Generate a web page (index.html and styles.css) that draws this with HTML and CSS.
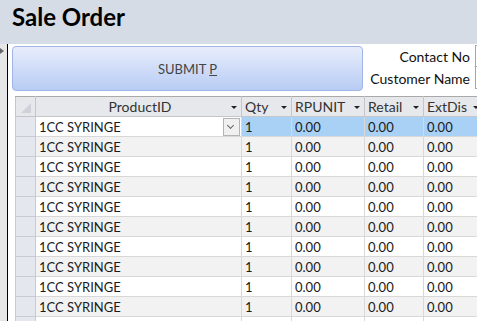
FILE: index.html
```html
<!DOCTYPE html>
<html lang="en">
<head>
    <meta charset="UTF-8">
    <meta name="viewport" content="width=device-width, initial-scale=1.0">
    <title>Sale Order</title>
    <link rel="stylesheet" href="styles.css">
</head>
<body>
    <!-- Form header -->
    <div class="form-header">
        <h1>Sale Order</h1>
    </div>

    <div class="form-body">
        <div class="nav-strip"><span class="nav-arrow"></span></div>

        <div class="detail">
            <div class="top-row">
                <button class="submit-btn">SUBMIT <u>P</u></button>
                <div class="fields">
                    <div class="field">
                        <label for="contact-no">Contact No</label>
                        <input type="text" id="contact-no">
                    </div>
                    <div class="field">
                        <label for="customer-name">Customer Name</label>
                        <input type="text" id="customer-name">
                    </div>
                </div>
            </div>

            <!-- Order lines datasheet -->
            <table class="sheet">
                <colgroup>
                    <col class="c-sel"><col class="c-prod"><col class="c-qty">
                    <col class="c-rp"><col class="c-ret"><col class="c-ext">
                </colgroup>
                <thead>
                    <tr>
                        <th class="corner"><span class="corner-mark"></span></th>
                        <th class="center">ProductID<span class="sort"></span></th>
                        <th>Qty<span class="sort"></span></th>
                        <th>RPUNIT<span class="sort"></span></th>
                        <th>Retail<span class="sort"></span></th>
                        <th>ExtDis<span class="sort"></span></th>
                    </tr>
                </thead>
                <tbody>
                    <tr class="current">
                        <td class="sel"></td>
                        <td class="combo">1CC SYRINGE<span class="combo-btn"></span></td>
                        <td>1</td><td>0.00</td><td>0.00</td><td>0.00</td>
                    </tr>
                    <tr><td class="sel"></td><td>1CC SYRINGE</td><td>1</td><td>0.00</td><td>0.00</td><td>0.00</td></tr>
                    <tr><td class="sel"></td><td>1CC SYRINGE</td><td>1</td><td>0.00</td><td>0.00</td><td>0.00</td></tr>
                    <tr><td class="sel"></td><td>1CC SYRINGE</td><td>1</td><td>0.00</td><td>0.00</td><td>0.00</td></tr>
                    <tr><td class="sel"></td><td>1CC SYRINGE</td><td>1</td><td>0.00</td><td>0.00</td><td>0.00</td></tr>
                    <tr><td class="sel"></td><td>1CC SYRINGE</td><td>1</td><td>0.00</td><td>0.00</td><td>0.00</td></tr>
                    <tr><td class="sel"></td><td>1CC SYRINGE</td><td>1</td><td>0.00</td><td>0.00</td><td>0.00</td></tr>
                    <tr><td class="sel"></td><td>1CC SYRINGE</td><td>1</td><td>0.00</td><td>0.00</td><td>0.00</td></tr>
                    <tr><td class="sel"></td><td>1CC SYRINGE</td><td>1</td><td>0.00</td><td>0.00</td><td>0.00</td></tr>
                    <tr><td class="sel"></td><td>1CC SYRINGE</td><td>1</td><td>0.00</td><td>0.00</td><td>0.00</td></tr>
                    <tr><td class="sel"></td><td></td><td></td><td></td><td></td><td></td></tr>
                </tbody>
            </table>
        </div>
    </div>
</body>
</html>
```

FILE: styles.css
```css
/* General styling */
body {
    margin: 0;
    width: 477px;
    height: 321px;
    overflow: hidden;
    background: #fff;
    font-family: Lato, "Liberation Sans", sans-serif;
    color: #1a1a1a;
}
.form-header {
    height: 44px;
    background: #d6dce5;
    padding-left: 12px;
}
.form-header h1 {
    margin: 0;
    font-size: 24px;
    font-weight: bold;
    line-height: 34px;
    color: #000;
}
.form-body {
    display: flex;
    height: 277px;
}
.nav-strip {
    position: relative;
    flex-shrink: 0;
    width: 7px;
    background: #e6e6e6;
    border-right: 1px solid #000;
}
.nav-arrow {
    position: absolute;
    top: 4px;
    left: 0;
    border-left: 4px solid #666;
    border-top: 3px solid transparent;
    border-bottom: 3px solid transparent;
}
.detail {
    flex: 1;
    overflow: hidden;
}
/* Button and header fields */
.top-row {
    display: flex;
    height: 52px;
}
.submit-btn {
    flex-shrink: 0;
    margin: 2px 0 0 4px;
    width: 351px;
    height: 45px;
    border: 1px solid #9fb5e6;
    border-radius: 4px;
    background: linear-gradient(#e8edfb, #b8ccf4);
    font-family: Lato, sans-serif;
    font-size: 13px;
    color: #444;
}
.fields {
    flex-shrink: 0;
    padding-top: 1px;
}
.field {
    display: flex;
    align-items: center;
    height: 22px;
}
.field label {
    width: 107px;
    margin-right: 5px;
    text-align: right;
    font-size: 14px;
    color: #111;
}
.field input {
    width: 60px;
    height: 22px;
    box-sizing: border-box;
    border: 1px solid #a6a6a6;
    margin: 0;
}
.field + .field input {
    border-top: none;
}
/* Datasheet */
.sheet {
    margin-left: 7px;
    border-collapse: collapse;
    table-layout: fixed;
    width: 468px;
    font-size: 13px;
}
.c-sel { width: 20px; }
.c-prod { width: 206px; }
.c-qty { width: 50px; }
.c-rp { width: 73px; }
.c-ret { width: 59px; }
.c-ext { width: 60px; }
.sheet th, .sheet td {
    height: 19px;
    padding: 0 0 0 3px;
    white-space: nowrap;
    overflow: hidden;
    text-align: left;
    font-weight: normal;
}
.sheet th {
    position: relative;
    background: #e6e8ec;
    border: 1px solid #c3c6cb;
    border-top-color: #a9a9a9;
    color: #333;
    font-size: 14px;
}
.sheet th.center {
    text-align: center;
}
.sheet td {
    border: 1px solid #d8d8d8;
}
.sheet tbody tr:nth-child(even) td {
    background: #f2f2f2;
}
.sheet td.sel {
    background: #e4e8ee;
    border-color: #c8ccd2;
}
.sheet tbody tr:nth-child(even) td.sel {
    background: #e4e8ee;
}
.sheet tr.current td {
    background: #a9d1f5;
}
.sheet tr.current td.sel {
    background: #e4e8ee;
}
.sheet tr.current td.combo {
    position: relative;
    background: #fff;
}
.sort {
    position: absolute;
    right: 4px;
    top: 9px;
    border-top: 3px solid #222;
    border-left: 3px solid transparent;
    border-right: 3px solid transparent;
}
.corner-mark {
    position: absolute;
    left: 5px;
    bottom: 3px;
    border-bottom: 10px solid #cfd3d9;
    border-left: 10px solid transparent;
}
.combo-btn {
    position: absolute;
    right: 1px;
    top: 1px;
    width: 15px;
    height: 16px;
    background: #f0f0f0;
    border: 1px solid #b4b4b4;
}
.combo-btn::after {
    content: "";
    position: absolute;
    left: 4px;
    top: 4px;
    width: 4px;
    height: 4px;
    border-right: 1px solid #666;
    border-bottom: 1px solid #666;
    transform: rotate(45deg);
}
```
